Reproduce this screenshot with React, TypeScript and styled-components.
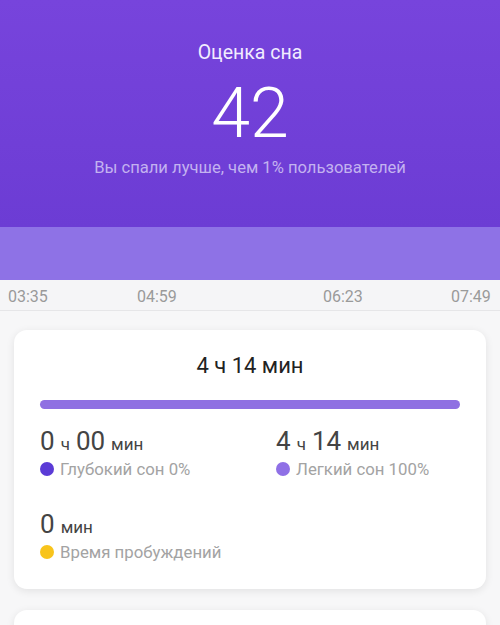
import styled, { createGlobalStyle } from 'styled-components'

const GlobalStyle = createGlobalStyle`
body {
    margin: 0;
    background: #f7f7f8;
    font-family: Roboto, "Noto Sans", "Liberation Sans", sans-serif;
}
`

const ticks = [
    { label: '03:35', left: 8 },
    { label: '04:59', left: 137 },
    { label: '06:23', left: 323 },
    { label: '07:49', left: 451 },
]

const App = () => {
    return (
        <Page>
            <GlobalStyle />
            <Header>
                <Title>Оценка сна</Title>
                <Score>42</Score>
                <Subtitle>Вы спали лучше, чем 1% пользователей</Subtitle>
            </Header>
            <Band />
            <Axis>
                {ticks.map(t => (
                    <Tick key={t.label} style={{ left: t.left }}>{t.label}</Tick>
                ))}
            </Axis>
            <Body>
                <Card>
                    <Total>4 ч 14 мин</Total>
                    <Bar />
                    <Stats>
                        <Stat>
                            <Value>0<Unit>ч</Unit>00<Unit>мин</Unit></Value>
                            <Legend><Dot color="#5b3bd6" />Глубокий сон 0%</Legend>
                        </Stat>
                        <Stat>
                            <Value>4<Unit>ч</Unit>14<Unit>мин</Unit></Value>
                            <Legend><Dot color="#8f70e6" />Легкий сон 100%</Legend>
                        </Stat>
                        <Stat>
                            <Value>0<Unit>мин</Unit></Value>
                            <Legend><Dot color="#f8c41c" />Время пробуждений</Legend>
                        </Stat>
                    </Stats>
                </Card>
                <Card />
            </Body>
        </Page>
    )
}

export default App

const Page = styled.div`
width: 500px;
height: 625px;
overflow: hidden;
`

const Header = styled.div`
height: 227px;
background: linear-gradient(180deg, #7744dc 0%, #6c3cd4 100%);
display: flex;
flex-direction: column;
align-items: center;
padding-top: 40px;
box-sizing: border-box;
`

const Title = styled.div`
font-size: 19.5px;
color: #f1ecff;
line-height: 26px;
`

const Score = styled.div`
font-size: 70px;
font-weight: 300;
color: #ffffff;
line-height: 70px;
margin-top: 12px;
`

const Subtitle = styled.div`
font-size: 16.6px;
color: #c3b2f0;
line-height: 20px;
margin-top: 10px;
`

const Band = styled.div`
height: 53px;
background: #8e72e6;
`

const Axis = styled.div`
position: relative;
height: 30px;
background: #f5f5f7;
border-bottom: 1px solid #e6e6e8;
`

const Tick = styled.span`
position: absolute;
top: 7px;
font-size: 16px;
line-height: 20px;
color: #9a9a9a;
`

const Body = styled.div`
padding: 19px 14px 0;
display: flex;
flex-direction: column;
gap: 21px;
`

const Card = styled.div`
background: #ffffff;
border-radius: 13px;
box-shadow: 0 2px 8px rgba(0, 0, 0, 0.09);
padding: 22px 26px 27px;
min-height: 60px;
`

const Total = styled.div`
text-align: center;
font-size: 22px;
color: #222;
line-height: 28px;
`

const Bar = styled.div`
height: 9px;
border-radius: 5px;
background: #8f70e2;
margin-top: 20px;
`

const Stats = styled.div`
display: grid;
grid-template-columns: 236px 1fr;
row-gap: 30px;
margin-top: 17px;
`

const Stat = styled.div`
display: flex;
flex-direction: column;
`

const Value = styled.div`
font-size: 26px;
color: #444;
line-height: 30px;
`

const Unit = styled.span`
font-size: 17px;
margin: 0 6px;
`

const Legend = styled.div`
display: flex;
align-items: center;
gap: 6px;
font-size: 16.8px;
color: #a3a3a3;
line-height: 20px;
`

const Dot = styled.span<{ color: string }>`
width: 14px;
height: 14px;
border-radius: 50%;
background: ${p => p.color};
`
